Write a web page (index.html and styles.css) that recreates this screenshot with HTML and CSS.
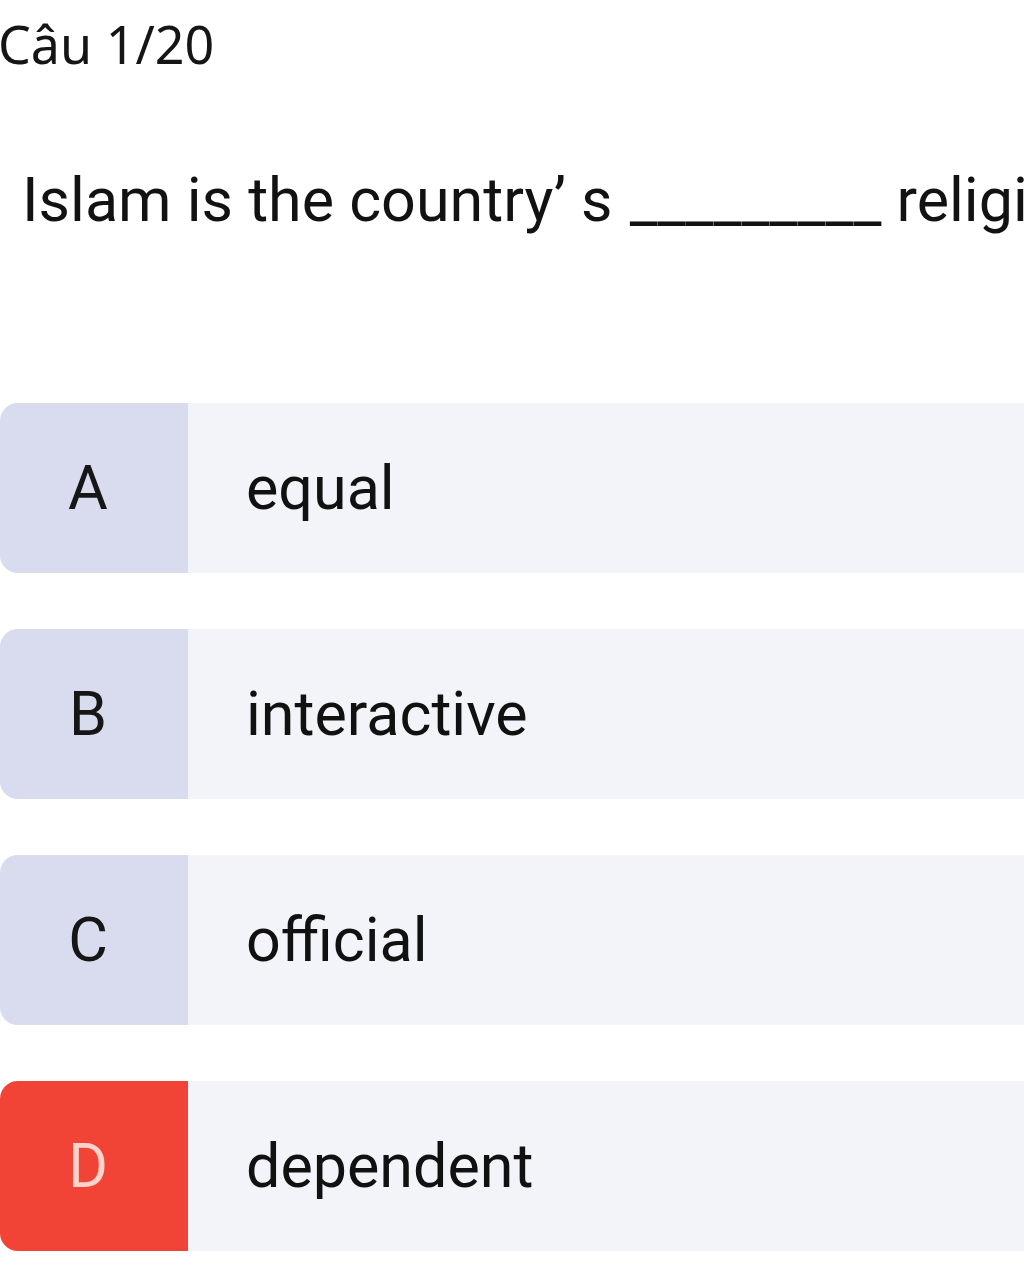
FILE: index.html
```html
<!DOCTYPE html>
<html lang="vi">
<head>
    <meta charset="UTF-8">
    <meta name="viewport" content="width=device-width, initial-scale=1.0">
    <title>Câu 1/20</title>
    <link rel="stylesheet" href="styles.css">
</head>
<body>
    <div class="quiz">
        <div class="counter">Câu 1/20</div>

        <p class="question">Islam is the country’ s <span class="blank">_________</span> religion.</p>

        <div class="options">
            <div class="option">
                <div class="letter">A</div>
                <div class="answer">equal</div>
            </div>
            <div class="option">
                <div class="letter">B</div>
                <div class="answer">interactive</div>
            </div>
            <div class="option">
                <div class="letter">C</div>
                <div class="answer">official</div>
            </div>
            <div class="option wrong">
                <div class="letter">D</div>
                <div class="answer">dependent</div>
            </div>
        </div>
    </div>
</body>
</html>
```

FILE: styles.css
```css
body {
    margin: 0;
    background: #ffffff;
    color: #111111;
    overflow: hidden;
}
.quiz {
    width: 1120px;
}
.counter {
    font-family: "Noto Sans", "Open Sans", sans-serif;
    font-size: 52px;
    line-height: 60px;
    padding-top: 14px;
    margin-left: -2px;
    color: #151515;
}
.question {
    font-family: Roboto, "Liberation Sans", sans-serif;
    font-size: 61px;
    line-height: 72px;
    margin: 90px 0 0 0;
    padding-left: 22px;
    white-space: nowrap;
    color: #121212;
}
.blank {
    font-size: 62px;
    margin-left: 2px;
}
.options {
    display: flex;
    flex-direction: column;
    gap: 56px;
    margin-top: 167px;
}
.option {
    display: flex;
    height: 170px;
    background: #f3f4f9;
    border-radius: 18px 0 0 18px;
    font-family: Roboto, "Liberation Sans", sans-serif;
    font-size: 61px;
}
.letter {
    width: 176px;
    padding-right: 12px;
    display: flex;
    align-items: center;
    justify-content: center;
    background: #d8dcee;
    border-radius: 18px 0 0 18px;
    color: #161616;
}
.answer {
    display: flex;
    align-items: center;
    padding-left: 58px;
    color: #111111;
}
.wrong .letter {
    background: #f14336;
    color: #fcd3ca;
}
```
